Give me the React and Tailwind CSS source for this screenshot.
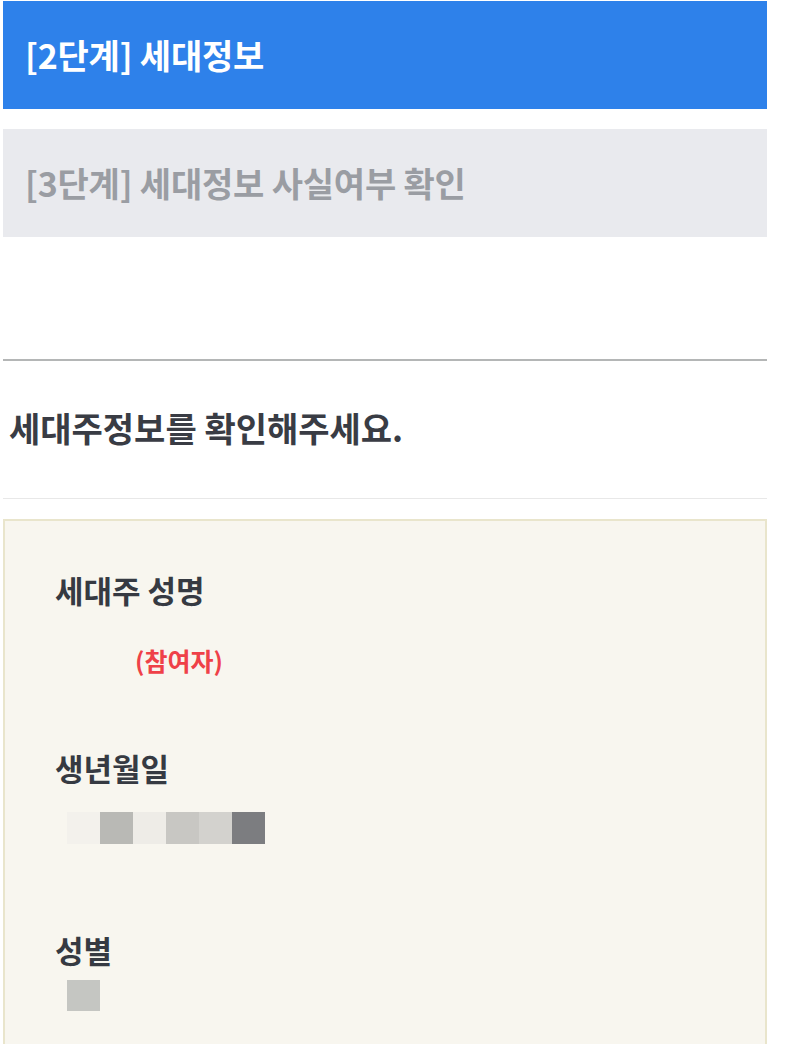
import React from 'react';

const font = { fontFamily: '"Noto Sans CJK KR", "Noto Sans", sans-serif' };

const birthBlocks = ['bg-[#f3f1ec]', 'bg-[#b9b9b5]', 'bg-[#eeece7]', 'bg-[#c8c7c3]', 'bg-[#d3d2ce]', 'bg-[#7c7d80]'];

const Step = ({ label, active }) => (
  <div
    className={`h-[108px] flex items-center pl-[22px] ${
      active ? 'bg-[#2e81ea] text-white' : 'bg-[#e9eaee] text-[#9a9da3]'
    }`}
  >
    <span className="text-[34px] font-bold tracking-[-0.2px] leading-none">{label}</span>
  </div>
);

const Field = ({ title, children, className = '' }) => (
  <div className={className}>
    <h3 className="text-[31px] font-bold text-[#363a42] leading-[34px]">{title}</h3>
    {children}
  </div>
);

export default function App() {
  return (
    <div className="min-h-screen bg-white" style={font}>
      <div className="w-[764px] ml-[3px] pt-[1px]">
        <Step label="[2단계] 세대정보" active />
        <div className="h-[20px]" />
        <Step label="[3단계] 세대정보 사실여부 확인" />

        <div className="mt-[122px] border-t-2 border-[#b4b6b6]" />

        <div className="h-[137px] flex items-center pl-[6px] pb-[4px]">
          <h2 className="text-[34px] font-bold text-[#393c44] tracking-[0px] leading-none">
            세대주정보를 확인해주세요.
          </h2>
        </div>
        <div className="border-t border-[#e8e8e8]" />

        <div className="mt-[20px] h-[600px] bg-[#f8f6ef] border-2 border-[#e9e5cc] px-[50px] pt-[52px]">
          <Field title="세대주 성명">
            <p className="mt-[38px] ml-[80px] text-[25px] font-bold text-[#ef4148] leading-[30px]">
              (참여자)
            </p>
          </Field>

          <Field title="생년월일" className="mt-[76px]">
            <div className="mt-[27px] ml-[12px] flex">
              {birthBlocks.map((c, i) => (
                <div key={i} className={`w-[33px] h-[32px] ${c}`} />
              ))}
            </div>
          </Field>

          <Field title="성별" className="mt-[89px]">
            <div className="mt-[13px] ml-[12px] w-[33px] h-[31px] bg-[#c5c6c2]" />
          </Field>
        </div>
      </div>
    </div>
  );
}
